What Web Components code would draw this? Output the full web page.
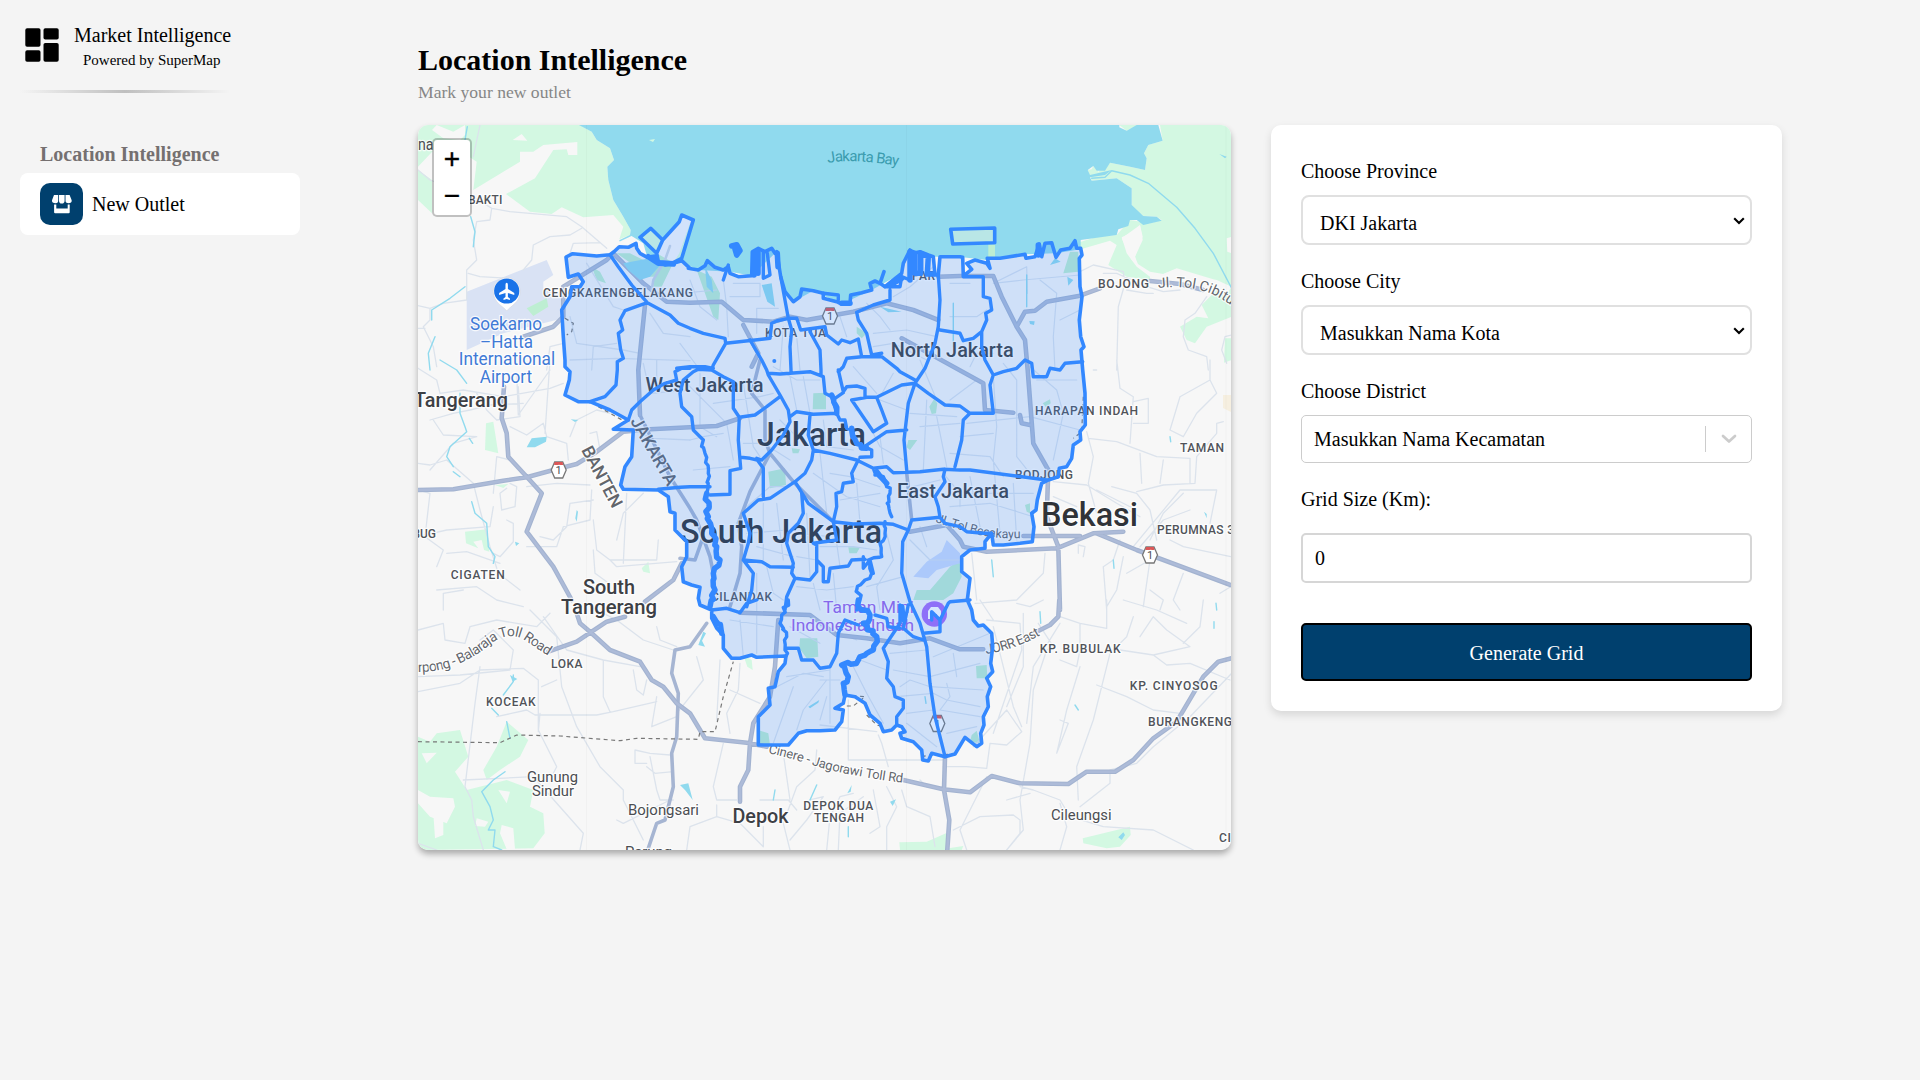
<!DOCTYPE html>
<html lang="en">
<head>
<meta charset="utf-8">
<title>Location Intelligence</title>
<style>
html,body{margin:0;height:100%;background:#f4f4f4;font-family:"Liberation Serif",serif;color:#000}
</style>
</head>
<body>
<app-shell>
  <side-bar slot="side">
    <nav-item>New Outlet</nav-item>
  </side-bar>
  <page-title slot="title" heading="Location Intelligence">Mark your new outlet</page-title>
  <jakarta-map slot="map"></jakarta-map>
  <grid-panel slot="panel">
    <form-field kind="select" label="Choose Province">DKI Jakarta</form-field>
    <form-field kind="select" label="Choose City">Masukkan Nama Kota</form-field>
    <form-field kind="combo" label="Choose District">Masukkan Nama Kecamatan</form-field>
    <form-field kind="number" label="Grid Size (Km):">0</form-field>
    <action-button>Generate Grid</action-button>
  </grid-panel>
</app-shell>
<script>
const define = (name, html, after) => customElements.define(name, class extends HTMLElement {
  constructor() {
    super();
    this.attachShadow({mode: 'open'}).innerHTML = typeof html === 'function' ? html(this) : html;
    if (after) after(this.shadowRoot, this);
  }
});

define('app-shell', `<style>
:host{display:flex;width:1920px;height:1080px;overflow:hidden;background:#f4f4f4}
aside{width:418px;flex:none}
main{display:flex;flex-direction:column;flex:1}
.row{display:flex;align-items:flex-start;gap:40px}
</style>
<aside><slot name="side"></slot></aside>
<main><slot name="title"></slot><div class="row"><slot name="map"></slot><slot name="panel"></slot></div></main>`);

define('side-bar', `<style>
:host{display:block;padding:24px 20px 0;width:280px}
.brand{display:flex;height:66px;gap:15px}
.brand svg{display:block;margin:4px 0 0 5px;width:34px;height:34px}
.t{font-size:20px;line-height:23px}
.s{font-size:15px;line-height:20px;padding:3px 0 0 9px}
hr{border:0;margin:0;width:210px;height:3px;background:linear-gradient(90deg,rgba(190,190,190,0),#bfbfbf,rgba(190,190,190,0))}
h2{margin:50px 0 7px 20px;font-size:20px;line-height:23px;color:#757070}
</style>
<div class="brand">
<svg viewBox="0 0 34 34"><rect x=".3" y=".3" width="15.2" height="18.4" rx="1.8"/><rect x="18.5" y=".3" width="15.2" height="11.2" rx="1.8"/><rect x=".3" y="22.3" width="15.2" height="11.4" rx="1.8"/><rect x="18.5" y="15" width="15.2" height="18.7" rx="1.8"/></svg>
<div><div class="t">Market Intelligence</div><div class="s">Powered by SuperMap</div></div></div>
<hr><h2>Location Intelligence</h2><slot></slot>`);

define('nav-item', `<style>
:host{display:flex;align-items:center;box-sizing:border-box;height:62px;padding:0 20px;gap:9px;background:#fff;border-radius:8px;font-size:20px;line-height:24px}
i{display:flex;align-items:center;justify-content:center;width:43px;height:42px;border-radius:10px;background:#00406e}
svg{width:22px;height:20px}
</style>
<i><svg viewBox="0 0 22 20"><g fill="#fff"><path d="M3 1h4.2v6.2a2.4 2.4 0 0 1-2.6 2C2.2 9.200.6 7.900 1 6.200z"/><path d="M8 1h5.600v5.800a2.800 2.800 0 0 1-5.600 0z"/><path d="M14.500 1h4.100l2.100 5.200c.3 1.700-1.200 3-3.100 3-1.700 0-2.900-.8-3.100-2z"/><path d="M3.100 10.600h2.200v4h11.400v-4h2v7.700a1 1 0 0 1-1 1H4.100a1 1 0 0 1-1-1z"/></g></svg></i><span><slot></slot></span>`);

define('page-title', el => `<style>
:host{display:block;height:125px;box-sizing:border-box;padding-top:42px}
h1{margin:0;font-size:30px;line-height:36px}
p{margin:3px 0 0;font-size:17.6px;line-height:22px;color:#868686}
</style><h1>${el.getAttribute('heading')}</h1><p><slot></slot></p>`);

define('grid-panel', `<style>
:host{display:flex;flex-direction:column;box-sizing:border-box;width:511px;height:586px;padding:35px 30px 30px;background:#fff;border-radius:10px;box-shadow:0 4px 8px rgba(0,0,0,.12);font-size:20px;line-height:22px}
</style><slot></slot>`);

define('form-field', el => {
  const kind = el.getAttribute('kind');
  const arrow = kind === 'select'
    ? '<svg class="a" viewBox="0 0 12 8"><path d="M1.200 1.200 6 6l4.800-4.800" fill="none" stroke="#000" stroke-width="2.100"/></svg>'
    : kind === 'combo'
    ? '<b></b><svg class="c" viewBox="0 0 16 10"><path d="M2 2l6 5.600L14 2" fill="none" stroke="#ccc" stroke-width="2.700" stroke-linecap="round" stroke-linejoin="round"/></svg>' : '';
  return `<style>
:host{display:block;margin-bottom:25px}
:host([kind=number]){margin-bottom:40px}
label{display:block;margin-bottom:13px}
.box{display:flex;box-sizing:border-box;height:50px;background:#fff}
.box span{flex:1}
.select{border:2px solid #e0e0e0;border-radius:8px;padding:15px 5px 0 17px}
.combo{border:1px solid #ccc;border-radius:5px;height:48px;padding:0 14px 0 12px;align-items:center}
.number{border:2px solid #d6d6d6;border-radius:5px;padding:12px 12px 0;margin-top:23px}
.a{width:12px;height:8px;margin-top:5px}
.c{width:16px;height:10px}
b{width:1px;height:26px;background:#ccc;margin-right:15px}
</style><label>${el.getAttribute('label')}</label><div class="box ${kind}"><span><slot></slot></span>${arrow}</div>`;
});

define('action-button', `<style>
:host{display:flex;box-sizing:border-box;height:58px;padding-top:2px;align-items:center;justify-content:center;border:2px solid #000;border-radius:5px;background:#00406e;color:#fff}
</style><slot></slot>`);

define('zoom-control', `<style>
:host{display:flex;flex-direction:column;box-sizing:border-box;width:40px;height:79px;border:2px solid rgba(0,0,0,.22);border-radius:5px;background:#fff;background-clip:padding-box;overflow:hidden;font:28px/37px "Liberation Sans",sans-serif;text-align:center;-webkit-text-stroke:.4px #000}
div{height:37px}
div:first-child{border-bottom:1px solid #ccc;height:36px;line-height:36px}
</style><div>+</div><div>−</div>`);

/* Map sheets: each letter is the origin of a sheet, whose units are thirds of a pixel. */
const SHEET = {A:[410,120],B:[680,120],C:[950,120],D:[410,360],E:[680,360],F:[950,360],G:[410,600],H:[820,600]};
function points(line) {
  let o = SHEET.A; const out = [];
  for (const t of line.trim().split(/\s+/)) {
    if (SHEET[t]) { o = SHEET[t]; continue; }
    const [x, y] = t.split(',').map(Number);
    out.push([o[0] + x / 3, o[1] + y / 3]);
  }
  return out;
}
let seed = 7;
const rnd = () => (seed = (seed * 16807) % 2147483647) / 2147483647 - .5;
function rough(p, amp) {
  const out = [p[0]];
  for (let i = 1; i < p.length; i++) {
    const [a, b] = [p[i - 1], p[i]], n = Math.max(1, Math.round(Math.hypot(b[0] - a[0], b[1] - a[1]) / 4));
    for (let k = 1; k < n; k++) out.push([a[0] + (b[0] - a[0]) * k / n + rnd() * amp, a[1] + (b[1] - a[1]) * k / n + rnd() * amp]);
    out.push(b);
  }
  return out;
}
const d = (line, close) => {
  const r = line.startsWith('~');
  let p = points(r ? line.slice(1) : line);
  if (r) p = rough(p, 4.5);
  return 'M' + p.map(q => q[0].toFixed(1) + ' ' + q[1].toFixed(1)).join('L') + (close ? 'Z' : '');
};
const all = (text, close) => text.trim().split('\n').map(l => d(l.trim(), close)).join('');

const GREEN = `
A 24,15 510,15 545,35 560,60 600,85 612,120 592,140 595,180 610,240 640,290 662,330 660,345 628,358 640,320 610,285 520,292 455,262 425,282 360,275 288,222 375,175 430,90 470,88 475,105 502,105 502,66 400,75 370,95 330,95 330,125 190,210 200,125 100,60 24,140
A 24,150 66,180 66,280 24,240
C 508,15 565,15 530,32
C 630,15 845,15 845,350 830,355 832,395 845,400 845,500 800,480 790,478 680,445 640,462 600,455 560,430 555,410 578,360 570,315 560,330 515,352 530,400 560,440 600,470 600,480 530,470 475,435 500,375 480,362 392,388 380,370 440,350 500,345 540,300 600,310 635,300 620,290 580,288 545,260 545,205 500,175 425,182 413,150 425,148 430,138 445,155 480,128 540,140 585,150 590,115 582,100 595,75 638,62
C 845,500 825,530 800,510 755,555 775,595 740,590 690,620 710,660 735,670 770,620 845,590
C 825,655 845,655 845,720 822,728
D 228,190 250,185 265,280 225,270
D 165,515 230,508 238,575 222,570 215,540 190,545 205,565 168,550
D 695,625 715,605 720,640 700,635
D 255,375 295,372 280,384
G 24,410 60,425 80,400 150,390 175,470 135,515 170,570 230,555 290,540 370,570 360,620 400,640 404,700 370,745 24,750
G 290,365 355,420 330,470 270,510 230,540 220,510 260,440
G 1000,165 1025,180 1028,210 1012,200
H 238,727 320,725 378,700 385,745 430,738 425,750 240,750
H 788,715 850,700 930,680 932,705 900,740 860,745 790,730`;
const HOLES = `
A 66,30 80,15 130,35 165,15 165,45 150,60 100,55
A 308,60 335,42 352,62
G 35,460 80,458 50,490
G 24,570 60,590 130,595 135,620 110,670 60,650 24,610
G 70,640 100,660 100,705 75,715
G 265,570 300,575 290,610
G 200,655 235,665 225,680 195,678
G 275,675 310,685 315,748 290,748 270,700
C 515,355 570,315 578,350 555,410 565,435 545,420
C 640,462 680,447 740,470 700,480`;
const SEA = `
A 507,15 545,35 560,60 600,85 612,120 592,140 595,180 610,240 640,290 662,330 660,345 700,370 712,412 B 0,425 55,450 150,455 215,467 290,395 315,515 340,545 400,512 485,552 575,510 665,460 690,390 760,410 840,410 C 38,412 110,420 225,403 318,400 392,388 392,360 430,355 500,345 505,328 535,318 540,300 560,300 580,315 635,302 620,290 580,288 545,255 545,205 500,175 425,182 420,172 465,165 485,150 420,165 413,150 430,138 440,152 465,152 480,128 540,140 585,150 590,115 582,100 595,75 638,62 625,15 560,15 530,32 508,22 508,15`;
const PONDS = `
D 350,262 365,235 410,230 408,245 375,262
D 482,178 505,180 495,186
D 500,450 504,455 500,485 496,475
D 315,545 328,550 318,558
G 865,135 880,95 888,100 876,122 885,140
G 810,555 835,550 848,600 825,570
G 300,225 322,237 308,245
H 210,605 228,598 218,618
H 82,580 95,555 92,575
H 895,712 910,697 915,705 905,720
A 640,430 720,415 760,425 720,470 690,480 655,450
B 245,495 275,490 285,560 262,545
B 75,440 95,480 100,520 80,500
C 300,435 315,415 332,425
C 352,470 370,480 355,497
B 600,560 665,575 625,577
C 238,603 254,604 252,615 240,612
G 1195,320 1228,300 1225,308 1200,325
C 808,102 830,110 825,115
F 762,455 770,462 770,475`;
const STREAMS = `
C 425,175 465,172 485,152 540,165 595,190 680,262 735,325 790,400 845,505
A 172,20 165,60
A 182,290 195,335 190,380
A 165,500 120,535 65,570 65,600
A 60,750 55,700 75,650
D 90,0 140,30 170,70
D 150,100 150,160 165,200 170,215 120,260 110,290 130,320
D 130,335 150,350
D 185,425 195,460 230,490 235,560 255,590 250,610
D 178,235 188,250
A 630,362 665,345
G 310,225 310,245 280,285
G 285,515 250,540 215,575 240,620 250,660 235,690 255,690 250,740 275,750
G 245,325 265,345
G 290,365 300,415
G 1220,555 1200,600
G 1095,570 1090,600
B 820,550 820,680
C 230,465 230,560
F 125,600 130,650
F 490,600 492,625
F 660,230 662,245
H 660,35 662,70
H 1188,10 1190,30
H 1182,65 1182,85
H 765,315 775,330
H 85,680 85,710
H 315,290 318,310`;
const MINOR = `
A 24,150 60,180 180,225 245,265 300,275 470,290 515,320 590,385
A 245,265 240,300 200,305 190,360 200,420 170,450 170,540 100,550 60,565 24,557
A 515,325 480,345 420,350 370,375 365,420 340,450
A 480,400 490,370 570,368
A 190,110 210,15
A 175,460 210,470 300,475
A 60,565 60,600 40,620 70,680 80,740
A 24,625 45,625
A 410,750 420,680 460,670
A 480,590 500,670 640,690 690,700
A 545,750 550,680 620,670
A 480,720 620,715 840,722
A 530,430 610,560 640,570
A 720,580 760,640 840,650
D 24,25 80,60 90,100 160,90 280,110 420,85 460,70
D 60,180 130,160 180,150 240,135 340,130
D 70,180 100,225 200,230 130,250 60,330
D 24,310 60,315 110,300 190,370 210,450 240,560 265,640 330,690
D 200,100 230,150 260,180 330,170 325,80
D 320,40 325,165 420,30
D 300,200 350,225 400,190 410,230 470,250 475,300
D 420,0 405,220
D 480,230 500,180 560,150 600,160
D 540,220 560,215 570,270
D 250,400 260,290 300,300
D 24,390 60,400 45,530 100,570 80,620
D 24,530 110,510 240,500 250,440
D 300,370 320,380 315,440 275,450 270,400 290,385
D 350,380 440,370 540,375
D 290,480 310,490 310,545 270,590 250,580
D 390,530 430,540 470,500 480,430 550,420
D 350,560 440,560 460,500 540,480 545,390
D 550,480 560,570 600,600 740,600 745,540
D 550,570 555,640 590,665
D 600,600 620,620 800,605
D 80,690 200,680 260,720 340,740
D 100,750 100,700 160,690
D 110,580 170,575 270,610
D 640,610 650,400
D 700,400 640,460 620,540
D 690,220 730,235 840,240
D 700,10 720,100 840,90
D 740,0 740,100
G 24,90 100,70 105,120 165,130 180,80 260,60 380,80 420,40
G 210,120 250,90 310,150 300,210 150,225 24,230
G 24,275 150,250 210,210 340,205 385,240 385,390 440,500 430,520
G 210,200 195,310 165,560 185,600 190,650 220,750
G 160,540 370,530 520,700 510,750
G 260,350 350,330 375,345 560,345 610,335 740,305
G 390,340 385,395
G 360,30 440,110 455,260 500,380 570,500 640,570 640,600 700,720
G 400,50 470,150 580,180 580,290 600,335
G 580,180 690,200
G 540,20 620,60 700,120 790,150
G 440,240 395,260
G 670,210 680,270 700,285 710,240
G 740,290 725,380 800,350
G 710,490 675,490 675,450 720,460 780,465
G 720,470 740,570 750,600 790,600
G 710,500 735,520 790,515
G 780,600 640,670 620,660
G 860,170 880,240 800,340
G 930,180 920,360
G 990,190 985,270 950,340 960,400
G 960,270 1050,310
G 940,430 910,560 920,600 980,600
G 920,615 920,650 990,670 1060,740 1060,680
G 830,750 840,680 920,650
G 1050,600 1135,600 1160,630
G 1120,460 1140,600
G 1220,450 1215,510 1160,560 1120,670 1140,750
G 1200,600 1240,590 1190,660 1140,720
G 740,80 750,120 800,140
G 24,730 80,750
H 85,300 85,480 370,480
H 0,375 170,395
H 175,405 185,430 205,500
H 370,500 440,500 500,505 510,430 560,435 605,395 560,330 460,440
H 500,60 600,70 605,150 520,400
H 520,80 580,320 605,380
H 480,0 520,60
H 610,40 610,200 560,320
H 655,70 700,140 680,150 640,270 630,430 600,600 610,690 560,750
H 720,70 640,200 620,370
H 720,50 780,70 780,150 770,200 720,180
H 780,70 860,85 860,0
H 780,200 740,330 710,460 745,370 720,360
H 940,50 920,110 870,160 820,360 770,500 775,600
H 900,150 1000,165 1110,140 1040,90 1000,50 960,110
H 1000,165 1040,195 1110,190 1230,240
H 1235,220 1110,350 1000,440 950,490 870,510 870,550 780,620
H 830,255 920,290 1000,330 1080,340
H 910,0 1010,30 1100,70
H 1150,0 1140,80 1090,130
H 600,560 640,570 720,600 750,650 850,680 1000,690 1120,750
H 400,690 480,650 580,645 600,660 600,700 560,750
H 630,580 560,600
H 720,610 740,680 720,750
H 440,750 420,690 500,530
H 300,540 320,560
H 160,570 180,680 150,700
H 245,570 260,620 330,650 345,740
H 100,580 60,590 30,650 20,750
H 130,590 60,640 55,750
H 200,560 230,620 200,680 200,750
F 415,235 500,245 620,290 720,295 720,370
F 430,30 440,30
F 500,0 510,85 550,110 540,250
F 550,125 595,115 595,190 550,190
F 690,110 780,60 800,100 740,160 700,230 660,210 690,110
F 780,60 780,0
F 820,185 800,190 800,220 740,290 735,370 640,375 560,395
F 570,280 575,370
F 640,300 630,370
F 410,215 430,290 415,370 440,460
F 310,365 410,375 500,430 570,470
F 310,410 380,440
F 485,380 560,400 600,450 620,540
F 440,390 560,450
F 400,590 405,560 385,555 385,580
F 510,540 490,600 460,620 470,750
F 550,560 690,390 800,390 780,490
F 700,400 640,460 600,540
F 570,560 640,480 720,450
F 520,590 500,690 470,740
F 530,640 600,600 580,740
F 660,540 700,560 842,590
F 600,690 640,720 630,750
F 700,640 670,720 690,750
F 842,680 810,700
F 75,730 200,720 280,640 285,580
F 65,580 80,720
F 200,730 240,740 280,720
C 390,455 430,435 520,455 525,490 505,560 500,750
C 460,460 500,460 590,500 640,515 690,510
C 530,510 590,520 610,520
C 770,530 735,580 705,600 700,650 715,690 770,710 775,750
C 845,645 825,650 815,690 830,730`;
const CITY = `
B 130,480 140,560 145,650
B 230,640 230,565 295,565
B 160,490 240,490 240,530 150,530
B 310,620 300,750
B 480,590 500,650
B 560,550 600,590 630,630
B 580,640 680,630 770,650
B 580,680 640,670 740,720
B 640,530 690,500 760,440
B 350,650 360,750
B 0,670 60,750
B 30,480 60,560 110,600
B 0,520 110,510
C 130,490 220,480 390,465
C 130,490 230,440 232,520
C 270,480 320,520 310,650 315,750
C 0,590 80,590 110,570
C 0,490 60,490
C 60,740 80,700 130,700
C 390,570 330,600
E 20,70 140,190 160,300
E 30,240 70,230 130,220
E 40,330 150,320
E 60,40 60,200 110,230
E 190,70 220,260 240,290
E 100,130 240,110 280,100
E 280,20 350,60 420,60
E 330,50 350,150
E 370,50 390,160
E 190,250 250,250 330,300
E 300,180 340,220 380,250
E 200,440 270,380 330,380
E 250,430 250,600
E 290,430 310,600
E 200,520 320,510
E 230,560 340,590
E 400,340 500,410 600,440
E 420,280 440,460
E 450,340 510,350 600,380
E 480,420 600,400
E 530,370 540,490
E 380,460 390,650
E 350,520 450,530
E 350,590 410,600
E 420,560 520,560 590,570
E 470,550 480,620
E 230,640 230,750
E 260,620 280,700 310,720
E 350,680 440,690 520,680
E 400,670 420,750
E 460,640 470,750
E 560,680 670,650
E 620,520 640,600 590,680 600,750
E 690,540 750,600 840,600
E 720,500 740,560
E 700,380 780,360
E 720,200 840,190
E 740,120 730,330
E 770,170 800,320
E 690,160 830,170
E 600,230 610,310
E 560,180 600,260 670,300
E 430,180 440,260 520,270
E 600,120 680,150
E 520,20 590,100
E 640,40 600,110
E 720,0 770,120
E 790,340 840,400 840,440
F 0,120 80,60
F 130,50 140,200 130,300 150,520
F 160,10 200,60 200,290 240,340
F 50,190 240,170 390,210
F 30,230 130,220
F 0,280 120,290 160,350
F 240,20 320,90 340,160 310,300
F 260,60 380,60
F 60,350 90,500
F 60,400 250,400
F 190,370 200,540
F 0,440 120,430 250,470
G 960,60 1090,80
G 1040,30 1040,160
G 990,60 1000,170
G 1130,230 1260,210
G 1100,260 1180,220 1240,230
G 1150,260 1090,430
G 1250,240 1180,330 1160,390
G 1140,80 1230,130
H 0,80 110,120
H 0,240 60,240
H 30,200 30,370
H 20,290 0,360
H 210,160 320,150
H 220,210 330,230 480,190
H 240,260 270,240 330,260 490,270
H 230,290 340,280 380,300 480,320
H 380,250 390,290 360,330 480,350
H 260,340 340,330
H 260,370 350,440
H 380,400 470,380
H 400,160 410,230
H 340,170 510,100
H 100,200 140,280 190,370
H 120,180 200,210`;
const ROAD = `
D 24,390 130,388 280,362 350,352 430,330 500,312 560,275 640,215 720,208 840,202 E 110,198 180,175
D 282,80 275,175 290,220 295,290 350,350 395,400 350,515 430,620 485,720
G 500,40 510,70 540,95 600,150 690,185 725,240 760,260 800,310 840,340 885,415 1010,428 1070,440
G 415,155 500,125 590,65 645,50
D 705,725 790,660 815,610
A 460,500 590,420 610,400 700,490 770,545 840,548 B 125,545 190,600 280,605 330,590 380,600 520,575 620,550 700,570 775,600
A 340,650 430,620 460,590 460,500
A 705,555 685,750 D 690,165
B 190,615 235,700 215,740
B 775,470 840,468 C 130,468 155,530 200,620 225,660 233,750 F 250,250 295,330 290,470 325,560 330,750 328,720
C 200,620 225,575 255,572 290,545 390,527 450,505
C 600,483 690,492 760,510
F -145,-65 100,70 105,150 190,158
F 210,165 215,190 240,195
E 690,515 800,495 840,540 F 40,560 110,575 320,565 430,520 520,515
F 220,528 390,528
F 440,520 560,570 842,675
G 990,38 1200,45 1280,105 H 140,115 240,130 330,115 420,148 490,148
H 650,95 690,75 715,50 718,0
G 1105,60 1095,200 1080,290 1030,370 1020,430 1015,510 990,560 990,605
H 375,470 372,570 388,660 382,750
H 250,540 370,568 450,577 515,528 600,550 745,552 800,515 885,515 940,480 1000,415 1070,365 1150,230 1195,185 1235,175`;
const ROAD2 = `
G 890,70 840,140 795,150 785,220 805,280 800,410 785,460 790,560 765,660 740,670 715,745
D 690,165 780,350 840,445 E 50,480 90,590 100,640
E 0,595 45,600 70,530
E 240,0 215,100 255,150 255,240 270,280 340,365 460,485
E 270,280 210,395 175,490 185,560 180,640 150,740
E 680,340 695,480`;
const BORDER = `
G 24,425 270,428 320,405 450,408 630,422 680,415 865,418 870,395 915,395 940,290 970,185
D 565,140 640,182
A 465,595 490,610 485,635 470,645
H 75,285 135,290 100,318 75,318
F 400,110 395,215 370,235
H 140,345 170,375 190,380
H 305,470 330,465 410,462`;
const ISLES = `
A 690,352 722,325 758,360 740,400
A 808,400 840,310 850,300 815,415 790,428
C 2,328 134,324 134,368 8,372`;
const PARKS = `
A 350,565 410,535 415,560 370,588
A 545,440 570,455 588,490 560,480
A 620,400 660,400 720,430 760,470 720,470
A 740,400 790,428 755,500 730,500
B 50,450 95,470 120,520 115,600 100,590
B 530,620 560,640 545,655 530,640
C 340,460 360,395 385,395 385,455
C 115,370 135,370 135,415 115,415
E 400,100 438,98 438,148 398,148
E 265,335 315,325 318,375 270,385
E 335,265 360,268 355,280 338,280
E 685,240 712,240 690,270 680,262
E 748,140 762,118 772,130 768,160 755,162
E 505,562 540,562 530,580 508,580
F 278,130 300,118 302,130 288,142
F 225,435 240,430 240,460 230,455
F 0,620 28,600 35,650 10,700 -20,720 -110,720 -100,690 -60,690
G 1170,115 1222,115 1225,170 1190,175 1168,145
G 1045,390 1075,400 1080,435 1045,435
H 468,198 500,195 502,235 470,235
H 455,405 470,392 480,430 450,425`;

const OUTER = `A 468,411 488,401 560,408 600,404 612,395 628,380 655,382 678,370 680,385 690,400 712,412 735,408 745,425 765,435 790,430 815,422 840,445 B 25,445 55,450 75,437 82,422 105,442 130,450 145,440 150,460 175,470 215,467 217,395 235,385 255,395 275,385 285,400 290,395 295,425 302,470 315,515 340,545 360,530 365,507 400,512 430,520 430,535 470,545 485,552 510,550 512,525 545,518 575,510 570,490 585,483 600,490 612,455 600,490 615,500 640,480 665,460 670,430 690,390 700,400 720,395 745,405 760,410 765,465 775,465 780,410 840,410 C 38,412 40,468 65,448 50,430 75,420 110,430 120,445 112,415 150,415 225,403 228,415 255,410 268,372 275,410 285,370 305,368 318,412 332,390 360,385 375,362 380,385 392,385 396,405 388,415 390,500 396,530 388,600 392,650 402,680 393,690 398,750 F 405,100 406,195 390,215 392,240 370,255 365,295 350,320 328,325 325,350 295,360 275,370 262,420 258,450 245,460 252,500 247,545 210,550 160,555 130,555 125,520 105,545 105,565 60,570 35,590 35,635 60,655 52,720 65,750 H 460,60 475,78 490,75 515,100 518,140 512,190 518,215 500,235 512,260 502,290 505,320 490,350 492,375 482,400 485,430 470,440 435,412 405,462 375,470 335,460 325,483 308,480 305,450 280,425 245,415 240,400 255,395 245,380 230,375 215,390 190,395 180,370 150,345 135,310 105,290 75,285 70,310 45,325 70,330 65,365 45,390 0,392 G 1190,392 1165,400 1135,435 1045,435 1045,350 1060,335 1080,315 1075,265 1095,260 1105,215 1125,190 1128,168 1040,172 1025,165 990,175 965,175 940,145 940,105 920,85 905,55 905,30 870,15 E 55,715 60,682 35,675 10,665 5,620 20,590 20,545 5,530 D 795,510 795,460 780,455 775,410 745,390 640,388 632,375 645,320 665,290 670,210 610,208 655,180 600,150 540,125 505,125 465,105 478,60 480,35 465,20 465,0 A 465,720 460,650 455,570 480,530 485,500 510,500 520,485 505,462 475,472 470,430`;
const INNER = `
A 600,404 625,440 665,495 712,548 780,585 805,610 840,625 B 70,640 135,655 137,670 270,655 275,610 290,603 325,595 350,595 362,630 435,620 440,645 475,672 485,660 510,668 535,657 545,710
A 712,548 645,572 630,600 638,630 625,640 632,690 640,715 622,725 622,750 D 618,75 585,110 540,125
B 302,470 325,595 335,630 330,680 333,750 E 333,35
B 137,670 100,735 95,750
A 800,745 840,740 B 75,740 100,745
E 95,30 55,28 40,35 10,60 0,100 5,140 35,170 40,210 70,240
~E 70,240 75,280 85,340 80,400
E 95,30 130,50 160,65 160,145 178,172 175,240 182,325 150,332 150,403 90,405
B 210,660 245,720 260,750 E 265,45 300,105 325,150 330,185 310,225 275,270 245,300 230,295
E 178,172 225,165 260,140 300,110
E 182,292 210,295 232,300 250,325 250,410
E 265,40 300,42 390,35 430,50 435,100 455,110 470,160 400,163 350,155 330,170
B 390,635 420,690 423,750 E 423,42
E 390,165 385,225 400,270 395,300 375,340 345,365 270,415 235,420 190,460 200,490 210,520 205,550 190,600
E 400,270 450,280 530,300 580,325 620,320 640,338 720,335 790,328 840,330 F 60,330 290,360
E 345,365 385,430 460,485 520,492 600,490 640,493 685,510 695,480 780,472 795,490 840,500 F 50,515 100,520 125,520
E 685,510 668,545 665,640 690,725 H 300,70 320,140 330,250 345,350 375,470
E 365,400 370,460 355,490 325,520 320,550 340,610 335,640 345,655 320,710 315,750
~G 1135,0 1115,45 1110,70 1130,110 1125,150 1128,168
E 190,600 245,605 270,620 340,622
E 190,600 220,640 215,690 200,740
E 345,655 390,660 410,635 410,555 400,550 470,540 460,485 470,440 468,400 485,395 490,370 520,365 515,340 535,300
E 410,600 430,620 430,665 445,665 450,625 505,618 515,600 555,598
~E 580,325 585,345 610,350 620,380 630,400 622,430 635,470
~E 615,485 615,520 600,550 605,590 565,600 575,640 555,660 530,690 540,720 530,750
E 550,590 550,625 570,600 580,640
E 470,160 480,180 495,180 500,205 515,210 530,250 575,270 575,290 540,292
E 475,30 490,95 500,80 530,78 555,85 555,110
B 545,710 500,715 490,740 E 475,35
E 465,115 490,98
E 515,120 560,112 590,112 665,75 705,70
E 515,120 580,215 620,190 605,150 590,112
E 550,262 620,215 680,210
B 545,710 605,710 650,745 E 660,35 705,60
B 530,577 535,600 560,640 575,705 605,700
B 530,577 580,555 630,540 630,510
B 775,465 780,540 775,620 765,670 735,745 E 705,70 685,130 672,240 680,330
E 705,70 745,100 795,135 840,138 F 60,160 130,160 120,75 130,45 105,0 C 95,680 95,635 110,600 107,580 125,570 120,535 100,530 100,470 40,470
F 130,45 160,35 200,25 225,0 C 245,730 F 250,50 290,50 300,25 330,30 345,10 398,5
B 780,630 840,640 C 40,662 70,655 95,635
F 60,160 40,180 35,240 15,320
E 795,328 790,350 795,365 765,410 775,440 780,472
D 745,388 810,382 840,380 E 90,380
F 60,720 0,725 E 805,730 H 360,60 335,35 335,60
H 310,100 360,95 360,60
H 265,15 250,85 280,110 310,120
G 905,30 950,25 990,38 1010,10 1040,0
G 1128,145 1165,145 1175,180 1210,180 1230,205 H 30,200 50,160 55,100 75,60 115,75
H 165,45 200,55 205,80 240,85
H 240,15 240,70 190,145 205,185 200,235 220,260 225,290 250,300 250,325 230,350 230,375
D 655,180 665,150 690,125 730,90 765,70 800,60 795,35 815,25 840,25
B 430,520 475,525 475,540
B 145,435 130,480
B 250,395 250,475 270,465 262,400
B 615,500 660,500 665,470 690,480`;
const THICK = `
~E 80,400 85,470 95,520 110,560 120,600 100,640 105,690 90,740
~H 115,0 125,30 150,45 130,70 170,110 160,150 140,160 115,180 65,195 85,230 70,250 75,285
~E 455,105 470,160
~E 515,205 530,250 560,265
B 222,465 222,400 234,392 234,460
B 690,480 690,395 705,400 705,460 722,460 722,400 745,410 742,462 760,462
B 485,550 510,550
B 630,495 665,475
~G 910,50 935,100
~E 590,335 620,370
B 292,400 294,440
H 245,20 250,60
A 715,410 745,430 790,432
B 155,378 170,374 180,392 170,405 165,388
C 265,375 265,405`;

const LABELS = [
 // text, x, baseline, size, width, class
 ['na',418,150,16,15.500,'m'],['BAKTI',468,203.5,12,34.500,'c'],['CENGKARENGBELAKANG',543,296.500,12,150,'c'],
 ['Soekarno',470,330,17.500,72,'b'],['–Hatta',480,347.700,17.500,53,'b'],['International',458.700,365.200,17.500,96.500,'b'],['Airport',479.700,382.700,17.500,52.500,'b'],
 ['Tangerang',414,406.700,20,94,'t'],['KOTA TUA',765,336.500,12,61,'c'],['PAR',912,280,12,23,'c'],
 ['North Jakarta',890.700,356.700,20,123,'t'],['BOJONG',1098,287.500,12,51,'c'],['HARAPAN INDAH',1035,415.300,12,103,'c'],
 ['TAMAN',1180,451.700,12,44,'c'],['BODJONG',1015,479,12,58,'c'],['Bekasi',1041,526,34,97,'x'],['PERUMNAS 3',1157,534.200,12,77,'c'],
 ['East Jakarta',897,498,20,112,'t'],['West Jakarta',645.500,391.700,20,118,'t'],['Jakarta',757,445.500,34,109,'x'],['South Jakarta',680,543.300,34,202,'x'],
 ['CIGATEN',450.700,578.900,12,54,'c'],['BUG',412.500,537.500,12,23.500,'c'],['South',583,594.200,20,52,'t'],['Tangerang',561,613.500,20,96,'t'],
 ['CILANDAK',711,601,12,61,'c'],['Taman Mini',823,613,17,91,'p'],['Indonesia Indah',791,631,17,123,'p'],
 ['LOKA',551,667.500,12,31.500,'c'],['KOCEAK',486,706.300,12,49.500,'c'],['Gunung',527,781.700,15.500,51,'m'],['Sindur',532,796,15.500,42,'m'],
 ['Bojongsari',628,815,15.500,71,'m'],['Depok',732.500,822.700,20,56,'t'],['Parung',625,857,15.500,47,'m'],['DEPOK DUA',803.300,810.200,12,70,'c'],['TENGAH',814,821.700,12,50,'c'],
 ['KP. BUBULAK',1039.700,653,12,81,'c'],['KP. CINYOSOG',1129.700,690.300,12,88,'c'],['BURANGKENG',1148,725.500,12,84,'c'],['Cileungsi',1051,820.200,15.500,60.500,'m'],['CI',1219,841.500,12,12,'c']
];
const shield = (x, y) => `<g transform="translate(${x} ${y})"><path d="M-7.500 0-4-8H4L7.500 0 4 8H-4Z" fill="#fff" stroke="#777" stroke-width="1.300"/><path d="M-4.500-6.500-3.800-8H3.800L4.500-5H-4.500Z" fill="#dc5757"/><text text-anchor="middle" y="4.300" font-size="11" fill="#555">1</text></g>`;

function mapSvg() {
  const t = LABELS.map(([s, x, y, z, w, c]) => `<text class="${c}" x="${x}" y="${y}" font-size="${z}" textLength="${w}"${'xtbmp'.includes(c) ? ' lengthAdjust="spacingAndGlyphs"' : ''}>${s}</text>`).join('');
  return `<svg viewBox="418 125 813 725" width="813" height="725">
<rect x="418" y="125" width="813" height="725" fill="#f7f7f7"/>
<path d="${all(GREEN, 1)}" fill="#d3f8e2"/>
<path d="${all(HOLES, 1)}" fill="#f7f7f7"/>
<path d="${d(SEA.trim(), 1)}" fill="#90daee"/>
<path d="M649 140l6-1-2 3z" fill="#d3f8e2"/>
<path d="${all('A 740,400 758,360 808,305 815,285 850,300 815,415 790,428 745,425', 1)}" fill="#f1f3fb"/>
<path d="${all(ISLES, 1)}" fill="#d3f8e2"/>
<path d="${all('A 170,515 410,420 430,465 400,485 400,510 460,520 460,595 280,640 170,690', 1)}" fill="#d9e2f4"/>
<path d="${all(PARKS, 1)}" fill="#bdeed2"/>
<path d="${all('E 700,650 740,605 785,575 800,540 840,580 840,610 770,630 745,655', 1)}" fill="#cbdafb"/>
<path d="M1223 395h8v17l-8-4z" fill="#f6efe0"/>
<g fill="none" stroke-linejoin="round" stroke-linecap="round">
<path d="${all(MINOR)}" stroke="#dce3ec" stroke-width="1.300"/>
<path d="${all(CITY)}" stroke="#d8e1ed" stroke-width="1.200"/>
<path d="${all(STREAMS)}" stroke="#90daee" stroke-width="1.400"/>
<path d="${all(ROAD2)}" stroke="#a6b5d2" stroke-width="3.600"/>
<path d="${all(ROAD)}" stroke="#a3b3d0" stroke-width="4.600"/>
<path d="${all(ROAD)}" stroke="#adbbd8" stroke-width="2.400"/>
<path d="${all('A 780,378 765,420 730,480 725,510')}" stroke="#c8d4e6" stroke-width="2.500"/>
<path d="${all(BORDER)}" stroke="#777" stroke-width="1.200" stroke-dasharray="4 3.500" stroke-linecap="butt"/>
</g>
<path d="${all(PONDS, 1)}" fill="#90daee"/>
<path d="M586.500 125v725M906.500 125v725M1226 125v725" stroke="#000" stroke-opacity=".025"/>
<path d="M506.700 311c-3.500-5-13.500-8-13.500-20a13.500 13.500 0 0 1 27 0c0 12-10 15-13.500 20z" fill="#fff" stroke="#d5d9e0" stroke-width=".7"/>
<circle cx="506.700" cy="291" r="12.600" fill="#1a73e8"/>
<path d="M505.500 285c0-3 2.400-3 2.400 0v4l6.400 4v2l-6.400-2v4l2 1.600v1.300l-3.200-.8-3.200.8v-1.300l2-1.600v-4l-6.400 2v-2l6.400-4z" fill="#fff"/>
<circle cx="934.300" cy="614" r="12.700" fill="#a66bf7"/><path d="M928 611l3-4h7l3 4v8h-4v-5h-5v5h-4z" fill="#fff"/>
${shield(830,316)}${shield(558.700,470)}${shield(1150,555)}${shield(937.300,723.500)}
${t}
<defs>
<path id="bay" d="M828 163Q850 158 900 166"/>
<path id="r1" d="M1158 288Q1195 284 1218 297T1238 316"/>
<path id="r2" d="M418 672Q442 672 461 663T490 644Q510 630 526 641T547 655"/>
<path id="r3" d="M768 753Q790 758 812 765T864 777 905 783"/>
<path id="r4" d="M986 654Q1015 650 1042 634"/>
<path id="r5" d="M935 522Q968 533 985 536T1024 538"/>
<path id="r6" d="M630 421L668 488"/>
<path id="r7" d="M581 450L613 510"/>
</defs>
<text font-size="15" fill="#3b9cae" style="stroke:none;fill:#3b9cae"><textPath href="#bay" textLength="71">Jakarta Bay</textPath></text>
<text class="r" font-size="14"><textPath href="#r1">Jl. Tol Cibitung</textPath></text>
<text class="r" font-size="13.800"><textPath href="#r2" textLength="144">rpong - Balaraja Toll Road</textPath></text>
<text class="r" font-size="13"><textPath href="#r3" textLength="138">Cinere - Jagorawi Toll Rd</textPath></text>
<text class="r" font-size="13.500"><textPath href="#r4" textLength="58">JORR East</textPath></text>
<text class="r" font-size="12.500"><textPath href="#r5" textLength="88">Jl. Tol Becakayu</textPath></text>
<text class="r k" font-size="17.500"><textPath href="#r6" textLength="76">JAKARTA</textPath></text>
<text class="r k" font-size="17.500"><textPath href="#r7" textLength="67">BANTEN</textPath></text>
<g stroke="#3388ff" stroke-linejoin="round" stroke-linecap="round" fill="none">
<path d="${d(OUTER, 1)}" fill="#3388ff" fill-opacity=".2" stroke-width="3.600"/>
<path d="${all('A 690,352 722,325 758,360 740,400\nA 740,400 758,360 808,305 815,285 850,300 815,415 790,428 745,425\nC 2,328 134,324 134,368 8,372', 1)}" fill="#3388ff" fill-opacity=".16" stroke-width="3.600"/>
<path d="${all(INNER)}" stroke-width="3.400"/>
<path d="${all(THICK)}" stroke-width="5.500"/>
</g><circle cx="774.300" cy="361" r="2" fill="#38f"/>
</svg>`;
}
define('jakarta-map', () => `<style>
:host{display:block;position:relative;width:813px;height:725px;flex:none;border-radius:10px;box-shadow:0 4px 6px rgba(0,0,0,.3)}
svg{display:block;border-radius:10px}
text{font-family:Roboto,sans-serif;paint-order:stroke;stroke:#fff;stroke-opacity:.8;stroke-width:2.500px;stroke-linejoin:round;fill:#4b4d52}
.c{font-weight:500;fill:#505359}
.t{font-weight:500;fill:#3d4045}
.x{font-weight:500;fill:#303338}
.b{fill:#3f7ad6}
.p{fill:#9a62e6}
.r{fill:#62656b}
.k{font-weight:500}
zoom-control{position:absolute;left:14px;top:13px}
</style>${mapSvg()}<zoom-control></zoom-control>`);
</script>
</body>
</html>
